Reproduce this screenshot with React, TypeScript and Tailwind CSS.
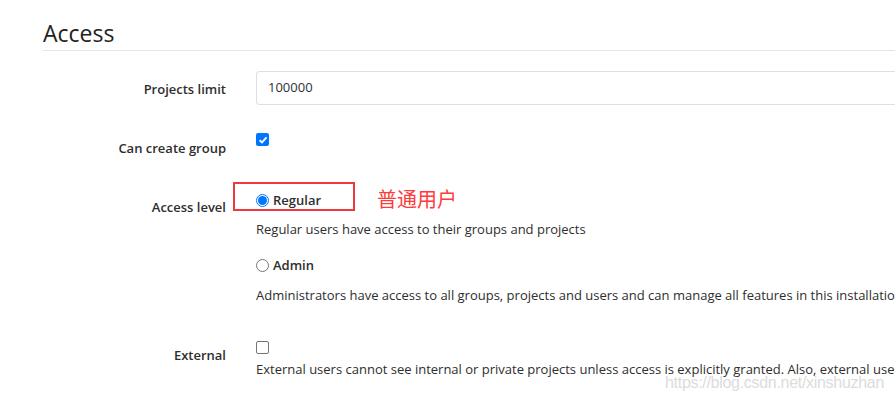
const font = { fontFamily: '"Open Sans", "Noto Sans CJK SC", sans-serif' }

const Radio = ({ checked }: { checked?: boolean }) => (
  <span
    className={`flex w-[13px] h-[13px] rounded-full items-center justify-center border ${
      checked ? 'border-[#0075ff]' : 'border-[#767676]'
    } bg-white`}
  >
    {checked && <span className="w-[9px] h-[9px] rounded-full bg-[#0075ff]" />}
  </span>
)

const Check = ({ checked }: { checked?: boolean }) =>
  checked ? (
    <span className="flex w-[13px] h-[13px] rounded-[2px] bg-[#0075ff] items-center justify-center">
      <svg width="10" height="10" viewBox="0 0 10 10" fill="none">
        <path d="M1.6 5.2 L4 7.5 L8.5 2.4" stroke="white" strokeWidth="1.9" />
      </svg>
    </span>
  ) : (
    <span className="block w-[13px] h-[13px] rounded-[2px] border border-[#767676] bg-white" />
  )

const Label = ({ children, pt }: { children: string; pt: string }) => (
  <div className={`w-[213px] shrink-0 pr-[30px] text-right font-semibold text-[13px] leading-[20px] text-[#2e2e2e] ${pt}`}>
    {children}
  </div>
)

export default function App() {
  return (
    <div className="w-[895px] h-[398px] overflow-hidden bg-white text-[#2e2e2e]" style={font}>
      <div className="pl-[43px]">
        <h2 className="pt-[18px] pb-[2px] text-[23px] leading-[30px] font-normal text-[#222] border-b border-[#e5e5e5]">
          Access
        </h2>
      </div>

      <div className="pl-[43px]">
        <div className="flex mt-[20px]">
          <Label pt="pt-[8px]">Projects limit</Label>
          <div className="flex-1 h-[34px] border border-[#dfdfdf] border-r-0 rounded-l-[4px] pl-[11px] flex items-center text-[13px] text-[#303030]">
            100000
          </div>
        </div>

        <div className="flex mt-[28px]">
          <Label pt="pt-[5px]">Can create group</Label>
          <div className="flex items-start">
            <Check checked />
          </div>
        </div>

        <div className="flex mt-[32px]">
          <Label pt="pt-[7px]">Access level</Label>
          <div className="relative whitespace-nowrap text-[13px] leading-[20px]">
            <div className="absolute left-[-23px] top-[-8px] w-[122px] h-[29px] border-2 border-[#ee3a3a]" />
            <div
              className="absolute left-[121px] top-[-3px] text-[20px] leading-[24px] text-[#ff3b3b]"
              style={{ fontFamily: '"Noto Sans CJK SC", sans-serif' }}
            >
              普通用户
            </div>
            <div className="flex items-center gap-[4px]">
              <Radio checked />
              <span className="font-semibold">Regular</span>
            </div>
            <div className="mt-[9px]">Regular users have access to their groups and projects</div>
            <div className="flex items-center gap-[4px] mt-[16px]">
              <Radio />
              <span className="font-semibold">Admin</span>
            </div>
            <div className="mt-[10px]">
              Administrators have access to all groups, projects and users and can manage all features in this installation
            </div>
          </div>
        </div>

        <div className="flex mt-[36px]">
          <Label pt="pt-[4px]">External</Label>
          <div className="relative whitespace-nowrap text-[13px] leading-[20px]">
            <div className="flex">
              <Check />
            </div>
            <div className="mt-[5px]">
              External users cannot see internal or private projects unless access is explicitly granted. Also, external users cannot create projects
            </div>
            <div
              className="absolute left-[409px] top-[33px] text-[16px] leading-[18px] text-[#dcdcdc] tracking-[-0.3px]"
              style={{ fontFamily: '"Liberation Sans", sans-serif' }}
            >
              https://blog.csdn.net/xinshuzhan
            </div>
          </div>
        </div>
      </div>
    </div>
  )
}
